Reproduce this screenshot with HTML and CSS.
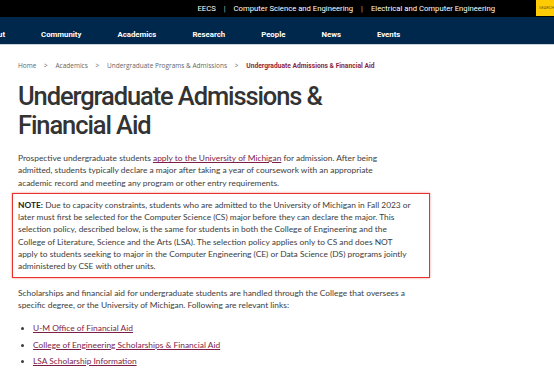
FILE: index.html
```html
<!DOCTYPE html>
<html lang="en">
<head>
    <meta charset="UTF-8">
    <meta name="viewport" content="width=device-width, initial-scale=1.0">
    <title>Undergraduate Admissions &amp; Financial Aid</title>
    <link rel="stylesheet" href="styles.css">
</head>
<body>
    <div class="topbar">
        <div class="toplinks">
            <a href="#">EECS</a>
            <span class="sep">|</span>
            <a href="#">Computer Science and Engineering</a>
            <span class="sep">|</span>
            <a href="#">Electrical and Computer Engineering</a>
        </div>
        <div class="search">SEARCH</div>
    </div>

    <nav class="mainnav">
        <ul>
            <li><a href="#">About</a></li>
            <li><a href="#">Community</a></li>
            <li><a href="#">Academics</a></li>
            <li><a href="#">Research</a></li>
            <li><a href="#">People</a></li>
            <li><a href="#">News</a></li>
            <li><a href="#">Events</a></li>
        </ul>
    </nav>

    <div class="content">
        <div class="breadcrumb">
            <a href="#">Home</a>
            <span class="arrow">&gt;</span>
            <a href="#">Academics</a>
            <span class="arrow">&gt;</span>
            <a href="#">Undergraduate Programs &amp; Admissions</a>
            <span class="arrow">&gt;</span>
            <span class="current">Undergraduate Admissions &amp; Financial Aid</span>
        </div>

        <h1>Undergraduate Admissions &amp; Financial Aid</h1>

        <p>Prospective undergraduate students <a href="#">apply to the University of Michigan</a> for admission. After being admitted, students typically declare a major after taking a year of coursework with an appropriate academic record and meeting any program or other entry requirements.</p>

        <div class="note">
            <p><strong>NOTE:</strong> Due to capacity constraints, students who are admitted to the University of Michigan in Fall 2023 or later must first be selected for the Computer Science (CS) major before they can declare the major. This selection policy, described below, is the same for students in both the College of Engineering and the College of Literature, Science and the Arts (LSA). The selection policy applies only to CS and does NOT apply to students seeking to major in the Computer Engineering (CE) or Data Science (DS) programs jointly administered by CSE with other units.</p>
        </div>

        <p>Scholarships and financial aid for undergraduate students are handled through the College that oversees a specific degree, or the University of Michigan. Following are relevant links:</p>

        <ul class="links">
            <li><a href="#">U-M Office of Financial Aid</a></li>
            <li><a href="#">College of Engineering Scholarships &amp; Financial Aid</a></li>
            <li><a href="#">LSA Scholarship Information</a></li>
        </ul>
    </div>
</body>
</html>
```

FILE: styles.css
```css
body {
    margin: 0;
    font-family: Lato, "Open Sans", Arial, sans-serif;
    color: #3d3d3d;
    background-color: #fff;
    overflow: hidden;
}

a {
    color: inherit;
    text-decoration: none;
}

/* barra superior preta */
.topbar {
    height: 17px;
    background-color: #000;
    display: flex;
    align-items: center;
    justify-content: flex-end;
    overflow: hidden;
}

.toplinks {
    display: flex;
    align-items: center;
    gap: 8px;
    margin-right: 41px;
    font-family: Roboto, Arial, sans-serif;
    font-size: 7.7px;
    color: #fff;
}

.sep {
    color: #bbb;
}

.search {
    flex: 0 0 18px;
    height: 16px;
    align-self: flex-start;
    background-color: #ffcb05;
    color: #6b5a10;
    font-family: Roboto, Arial, sans-serif;
    font-size: 4px;
    line-height: 16px;
    padding-left: 3px;
    box-sizing: border-box;
    overflow: hidden;
    white-space: nowrap;
}

/* menu principal */
.mainnav {
    height: 27px;
    background-color: #00274c;
    border-bottom: 1px solid #c9d1db;
    overflow: hidden;
}

.mainnav ul {
    list-style: none;
    margin: 0 0 0 -16px;
    padding: 0;
    height: 27px;
    display: flex;
    align-items: center;
    gap: 36px;
}

.mainnav a {
    color: #fff;
    font-family: Roboto, Arial, sans-serif;
    font-weight: 700;
    font-size: 7.8px;
    white-space: nowrap;
}

/* conteudo */
.content {
    padding: 16px 0 0 18px;
    width: 391px;
}

.breadcrumb {
    font-family: "Open Sans", Arial, sans-serif;
    font-size: 6.5px;
    line-height: 10px;
    color: #666;
    white-space: nowrap;
}

.breadcrumb .arrow {
    margin: 0 6px;
}

.breadcrumb .current {
    color: #8e1f3a;
    font-weight: 700;
    font-size: 6.7px;
    font-family: Roboto, Arial, sans-serif;
}

h1 {
    font-family: Roboto, Arial, sans-serif;
    font-weight: 500;
    font-size: 25.5px;
    letter-spacing: -1.1px;
    line-height: 29px;
    color: #333;
    margin: 11px 0 12px;
}

p {
    font-size: 8.4px;
    line-height: 12.3px;
    margin: 0;
}

p a, .links a {
    color: #7d1d49;
    text-decoration: underline;
}

.note {
    margin: 4px -21px 9px -6px;
    padding: 5px 18px 4px 5px;
    border: 1px solid #e8332c;
    box-shadow: 0 0 2px rgba(232, 51, 44, 0.6);
}

.note strong {
    color: #222;
}

.links {
    margin: 11px 0 0;
    padding-left: 15px;
    font-size: 8.4px;
    line-height: 12px;
}

.links li {
    margin-bottom: 4.3px;
}
```
